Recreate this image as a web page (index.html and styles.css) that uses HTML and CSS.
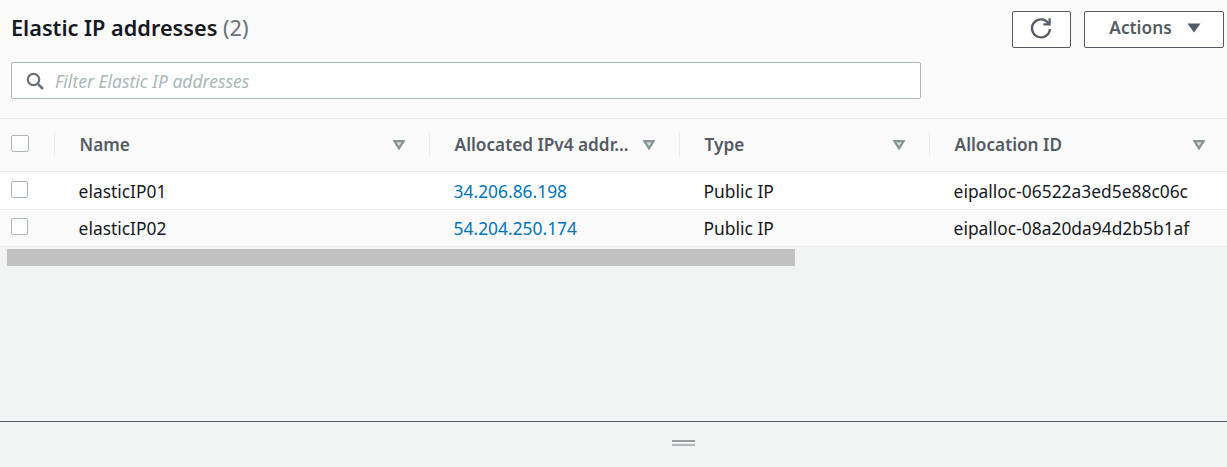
FILE: index.html
```
<!DOCTYPE html>
<html lang="en">
<head>
<meta charset="utf-8">
<title>Elastic IP addresses</title>
<link rel="stylesheet" href="styles.css">
</head>
<body>
<main class="page">
  <section class="panel">
    <header class="toolbar">
      <h1 class="title">Elastic IP addresses <span class="count">(2)</span></h1>
      <div class="actions">
        <button class="btn btn-icon" aria-label="Refresh">
          <svg class="refresh" width="24" height="24" viewBox="0 0 24 24" fill="none" stroke="#545b64" stroke-width="2.4"><path d="M19.4 7.2A9 9 0 1 0 21 13"/><path d="M20.6 2.2V8.3H14.4" stroke-width="2.2"/></svg>
        </button>
        <button class="btn btn-actions"><span class="btn-label">Actions</span>
          <svg class="caret" width="14" height="10" viewBox="0 0 14 10"><path d="M0.5 0.5H13.5L7 9.5Z" fill="#545b64"/></svg>
        </button>
      </div>
    </header>
    <div class="filter">
      <svg width="20" height="20" viewBox="0 0 20 20" fill="none" stroke="#687078"><circle cx="8.5" cy="8.5" r="5.7" stroke-width="2.2"/><path d="M12.8 12.8L18 18" stroke-width="2.6"/></svg>
      <span class="placeholder">Filter Elastic IP addresses</span>
    </div>
  </section>
  <section class="table">
    <div class="row head">
      <div class="cell check"><span class="box box-head"></span></div>
      <div class="cell th"><span class="label">Name</span><svg class="sort" width="12" height="10" viewBox="0 0 12 10"><path d="M1.4 1.2H10.6L6 8.4Z" fill="#d5dbdb" stroke="#879596" stroke-width="2.2"/></svg></div>
      <div class="cell th"><span class="label">Allocated IPv4 addr...</span><svg class="sort" width="12" height="10" viewBox="0 0 12 10"><path d="M1.4 1.2H10.6L6 8.4Z" fill="#d5dbdb" stroke="#879596" stroke-width="2.2"/></svg></div>
      <div class="cell th"><span class="label">Type</span><svg class="sort" width="12" height="10" viewBox="0 0 12 10"><path d="M1.4 1.2H10.6L6 8.4Z" fill="#d5dbdb" stroke="#879596" stroke-width="2.2"/></svg></div>
      <div class="cell th"><span class="label">Allocation ID</span><svg class="sort" width="12" height="10" viewBox="0 0 12 10"><path d="M1.4 1.2H10.6L6 8.4Z" fill="#d5dbdb" stroke="#879596" stroke-width="2.2"/></svg></div>
    </div>
    <div class="row body r1">
      <div class="cell check"><span class="box"></span></div>
      <div class="cell td">elasticIP01</div>
      <div class="cell td"><a class="link" href="#">34.206.86.198</a></div>
      <div class="cell td">Public IP</div>
      <div class="cell td">eipalloc-06522a3ed5e88c06c</div>
    </div>
    <div class="row body r2">
      <div class="cell check"><span class="box"></span></div>
      <div class="cell td">elasticIP02</div>
      <div class="cell td"><a class="link" href="#">54.204.250.174</a></div>
      <div class="cell td">Public IP</div>
      <div class="cell td">eipalloc-08a20da94d2b5b1af</div>
    </div>
    <div class="scrollbar"><div class="thumb"></div></div>
  </section>
  <div class="spacer"></div>
  <footer class="resizer"><span class="handle"></span></footer>
</main>
</body>
</html>
```
FILE: styles.css
```
* { box-sizing: border-box; }
html, body { margin: 0; height: 100%; }
body {
  background: #f2f3f3;
  font-family: "Noto Sans", "Open Sans", sans-serif;
  color: #16191f;
  overflow: hidden;
}
.page { display: flex; flex-direction: column; height: 467px; overflow: hidden; }
.panel { background: #fafafa; height: 118px; padding: 11px 3px 0 11px; flex: none; }
.toolbar { display: flex; justify-content: space-between; align-items: flex-start; height: 36px; }
.title { margin: 0; padding-top: 3px; font-size: 21.7px; line-height: 28px; font-weight: 600; color: #16191f; }
.count { font-weight: 400; color: #687078; }
.actions { display: flex; gap: 13px; }
.btn {
  height: 37px;
  background: #fff;
  border: 1px solid #545b64;
  border-radius: 2px;
  color: #545b64;
  font: 600 17.3px/1 "Noto Sans", sans-serif;
  display: flex;
  align-items: center;
  justify-content: center;
  padding: 0;
}
.btn-icon { width: 59px; }
.refresh { margin: -4px 2px 0 0; }
.btn-actions { width: 140px; gap: 15px; padding-left: 2px; }
.btn-label { margin-top: -3px; }
.caret { margin-top: -3px; }
.filter {
  margin-top: 15px;
  width: 910px;
  height: 37px;
  background: #fff;
  border: 1px solid #aab7b8;
  border-radius: 2px;
  display: flex;
  align-items: center;
  gap: 10px;
  padding-left: 13px;
}
.placeholder { font-style: italic; font-size: 17.5px; color: #aab7b8; }
.table { flex: none; }
.row { display: grid; grid-template-columns: 54px 375px 250px 250px 300px; width: 1229px; }
.head { height: 54px; background: #fafafa; border-top: 1px solid #eaeded; border-bottom: 1px solid #eaeded; padding-top: 13px; align-items: start; }
.head .check { height: 25px; padding-bottom: 2px; }
.body { font-size: 17.4px; align-items: center; border-bottom: 1px solid #eaeded; }
.r1 { height: 38px; background: #fff; }
.r2 { height: 37px; background: #fafafa; }
.cell { display: flex; align-items: center; min-width: 0; }
.check { padding-left: 11px; }
.body .check { padding-bottom: 3px; }
.box { width: 17px; height: 17px; background: #fff; border: 1px solid #aab7b8; border-radius: 2px; }
.box-head { width: 18px; height: 17px; }
.th { height: 25px; border-left: 1px solid #eaeded; padding: 0 24px 0 24.6px; justify-content: space-between; font-size: 17.2px; font-weight: 600; color: #545b64; }
.td { padding-left: 24.6px; white-space: nowrap; }
.label { white-space: nowrap; }
.sort { flex: none; }
.link { color: #0073bb; text-decoration: none; }
.scrollbar { height: 20px; padding: 2px 0 1px 7px; }
.thumb { width: 788px; height: 17px; background: #c1c1c1; }
.spacer { flex: 1; }
.resizer { height: 46px; flex: none; border-top: 1px solid #545b64; display: flex; padding: 18px 0 0 672px; }
.handle { width: 23px; height: 6px; border-top: 2px solid #9a9d9f; border-bottom: 2px solid #b4b6b7; }
```
